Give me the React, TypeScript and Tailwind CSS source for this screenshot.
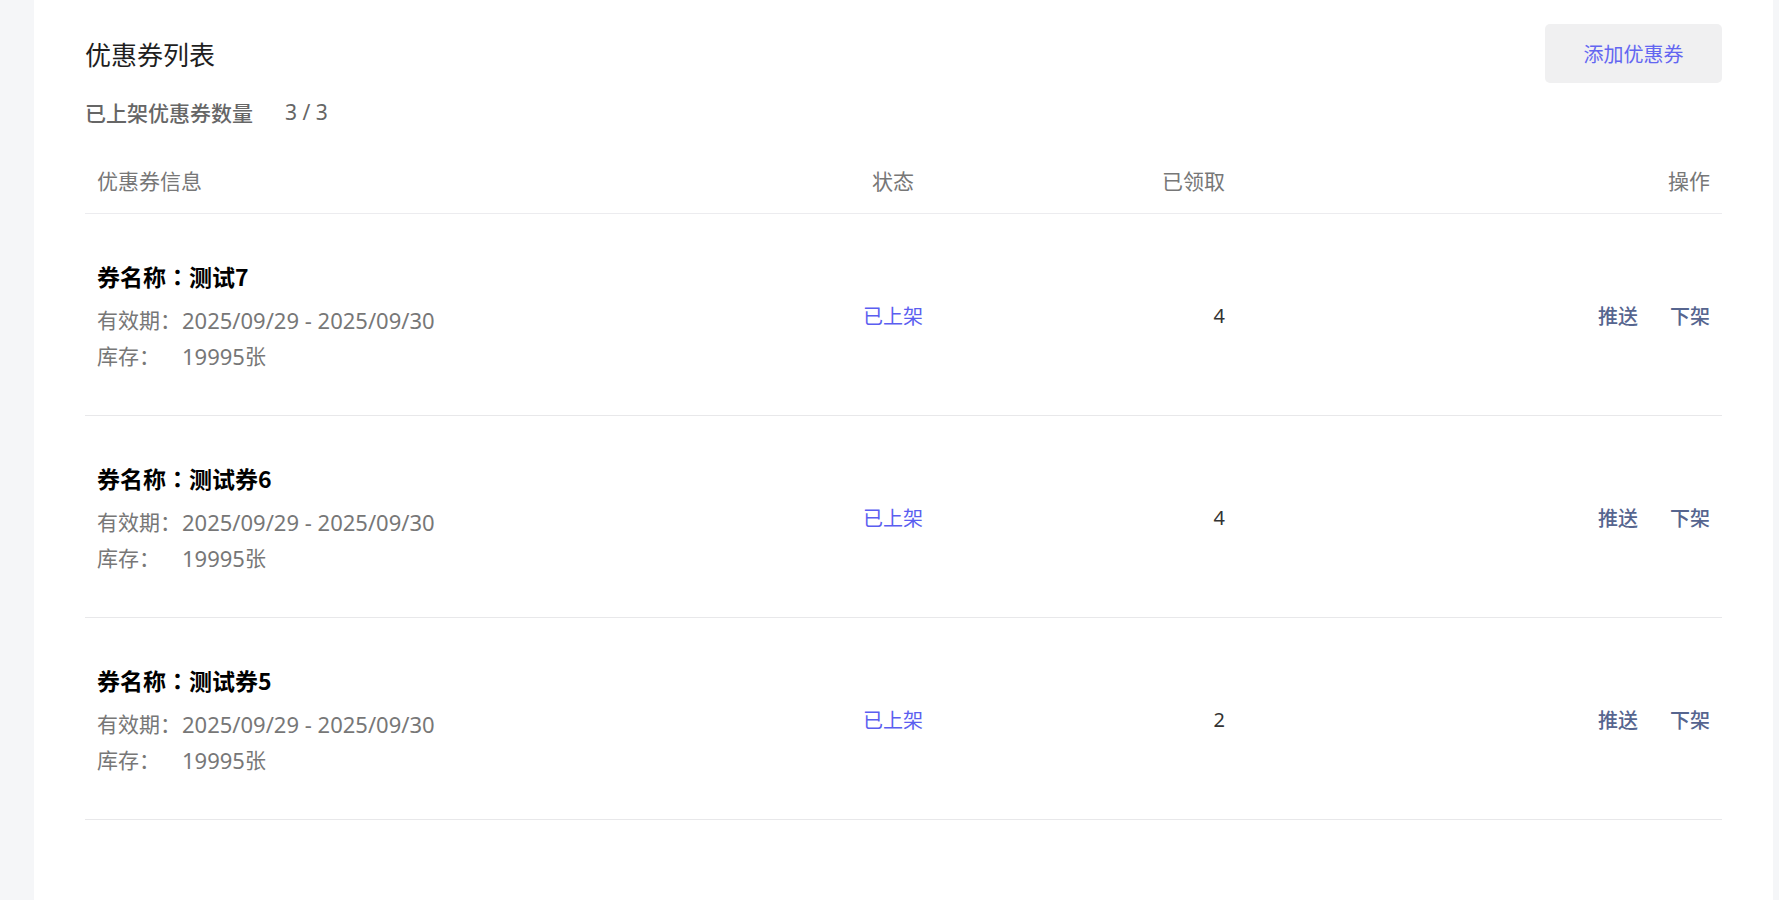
const coupons = [
  { name: "测试7", period: "2025/09/29 - 2025/09/30", stock: "19995", received: 4 },
  { name: "测试券6", period: "2025/09/29 - 2025/09/30", stock: "19995", received: 4 },
  { name: "测试券5", period: "2025/09/29 - 2025/09/30", stock: "19995", received: 2 },
];

const font = {
  fontFamily: '"Noto Sans CJK SC", "Noto Sans", sans-serif',
};

export default function App() {
  return (
    <div className="flex min-h-[900px] bg-[#f5f6f8]" style={font}>
      <div className="w-[34px] shrink-0" />

      <main className="flex-1 bg-white px-[51px] pt-6">
        {/* title + add button */}
        <div className="flex h-[59px] items-center justify-between">
          <h1 className="text-[26px] leading-9 font-normal text-[#1f1f1f]">优惠券列表</h1>
          <button className="h-[59px] w-[177px] rounded-[5px] bg-[#f0f0f1] text-[20px] text-[#6366f1]">
            添加优惠券
          </button>
        </div>

        <div className="mt-[15px] flex h-[30px] items-center text-[21px]">
          <span className="font-medium text-[#666]">已上架优惠券数量</span>
          <span className="ml-[32px] font-['Noto_Sans'] text-[21px] text-[#666]">3 / 3</span>
        </div>

        {/* table header */}
        <div className="mt-[21px] flex h-[65px] items-center border-b border-[#ececef] px-3 text-[21px] text-[#777]">
          <div className="w-[736px]">优惠券信息</div>
          <div className="w-[120px] text-center">状态</div>
          <div className="w-[272px] text-right">已领取</div>
          <div className="flex-1 text-right">操作</div>
        </div>

        {coupons.map((c) => (
          <div
            key={c.name}
            className="flex items-center border-b border-[#e8e8ea] px-3 pt-[44px] pb-[41px]"
          >
            <div className="w-[736px]">
              <div className="flex h-9 items-center text-[23px] font-bold text-black">
                券名称<span className="font-['Noto_Sans_CJK_TC']">：</span>
                {c.name}
              </div>
              <div className="mt-2 flex h-9 items-center text-[21px] text-[#777]">
                <span className="w-[85px]">有效期：</span>
                <span className="font-['Noto_Sans'] text-[22px]">{c.period}</span>
              </div>
              <div className="flex h-9 items-center text-[21px] text-[#777]">
                <span className="w-[85px]">库存：</span>
                <span className="font-['Noto_Sans'] text-[22px]">{c.stock}</span>
                <span>张</span>
              </div>
            </div>
            <div className="w-[120px] text-center text-[20px] text-[#5b5ef0]">已上架</div>
            <div className="w-[272px] text-right font-['Noto_Sans'] text-[20px] text-[#333]">
              {c.received}
            </div>
            <div className="flex flex-1 justify-end gap-8 text-[20px] font-medium text-[#56658f]">
              <span>推送</span>
              <span>下架</span>
            </div>
          </div>
        ))}
      </main>

      <div className="w-[6px] shrink-0" />
    </div>
  );
}
